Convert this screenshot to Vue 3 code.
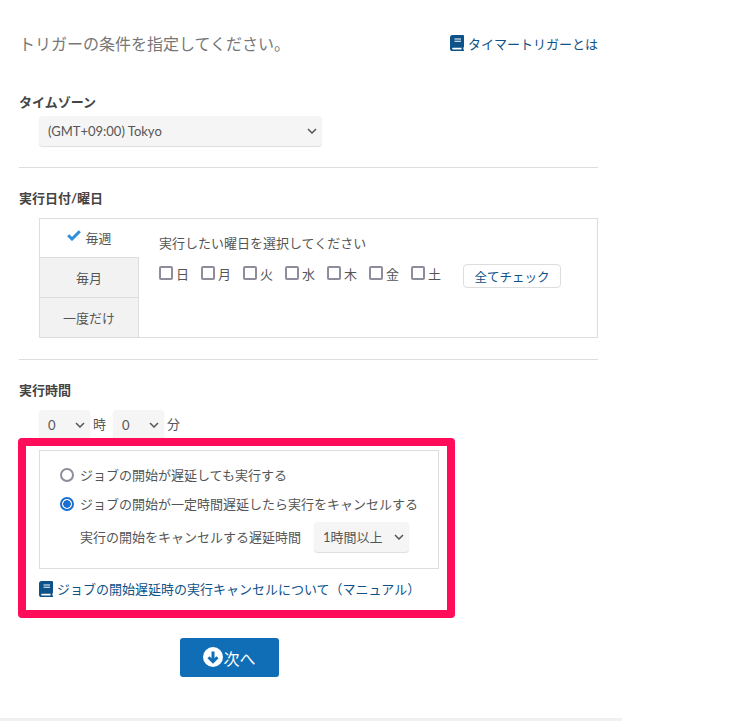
<script setup>
const days = ['日', '月', '火', '水', '木', '金', '土']
</script>

<template>
  <main class="page">
    <header class="head">
      <p class="lead">トリガーの条件を指定してください。</p>
      <a class="link head-link">
        <svg class="book" viewBox="0 0 14 16"><path d="M2.600 0H13a1 1 0 0 1 1 1v10.600a1 1 0 0 1-.5.8c-.2.6-.2 1.600 0 2.200a.8.8 0 0 1 .5.7v.2a.5.5 0 0 1-.5.5H2.600A2.600 2.600 0 0 1 0 13.400V2.600A2.600 2.600 0 0 1 2.600 0ZM4.500 3.400v1h6.500v-1Zm0 2.400v1h6.500v-1ZM2.800 12.800a.9.9 0 0 0 0 1.700h8.800a7 7 0 0 1 0-1.700Z" fill="#0d5288" fill-rule="evenodd"/></svg>
        タイマートリガーとは
      </a>
    </header>

    <section class="zone">
      <h3>タイムゾーン</h3>
      <select class="sel tz"><option>(GMT+09:00) Tokyo</option></select>
    </section>

    <hr class="rule rule-a" />

    <section class="date">
      <h3>実行日付/曜日</h3>
      <div class="tabs">
        <div class="tablist">
          <div class="tab on">
            <svg class="tick" viewBox="0 0 14 11"><path d="M1.200 5.200 5 9l7.800-7.800" fill="none" stroke="#2f8fdf" stroke-width="3"/></svg>
            毎週
          </div>
          <div class="tab">毎月</div>
          <div class="tab">一度だけ</div>
        </div>
        <div class="panel">
          <p class="hint">実行したい曜日を選択してください</p>
          <div class="days">
            <label v-for="d in days" :key="d" class="day"><span class="box"></span>{{ d }}</label>
            <button class="all">全てチェック</button>
          </div>
        </div>
      </div>
    </section>

    <hr class="rule rule-b" />

    <section class="time">
      <h3>実行時間</h3>
      <div class="clock">
        <select class="sel num"><option>0</option></select><span>時</span>
        <select class="sel num"><option>0</option></select><span>分</span>
      </div>
      <div class="delay">
        <div class="radio-row"><span class="radio"></span>ジョブの開始が遅延しても実行する</div>
        <div class="radio-row second"><span class="radio checked"></span>ジョブの開始が一定時間遅延したら実行をキャンセルする</div>
        <div class="cancel-row">
          <span class="cancel-label">実行の開始をキャンセルする遅延時間</span>
          <select class="sel hour"><option>1時間以上</option></select>
        </div>
      </div>
      <a class="link manual">
        <svg class="book" viewBox="0 0 14 16"><path d="M2.600 0H13a1 1 0 0 1 1 1v10.600a1 1 0 0 1-.5.8c-.2.6-.2 1.600 0 2.200a.8.8 0 0 1 .5.7v.2a.5.5 0 0 1-.5.5H2.600A2.600 2.600 0 0 1 0 13.400V2.600A2.600 2.600 0 0 1 2.600 0ZM4.500 3.400v1h6.500v-1Zm0 2.400v1h6.500v-1ZM2.800 12.800a.9.9 0 0 0 0 1.700h8.800a7 7 0 0 1 0-1.700Z" fill="#0d5288" fill-rule="evenodd"/></svg>
        ジョブの開始遅延時の実行キャンセルについて（マニュアル）
      </a>
      <div class="highlight"></div>
    </section>

    <div class="action">
      <button class="next">
        <svg class="down" viewBox="0 0 20 20"><circle cx="10" cy="10" r="10" fill="#fff"/><path d="M10 4.500v10M5.500 10.200 10 14.700l4.500-4.500" fill="none" stroke="#0f6eb5" stroke-width="3"/></svg>次へ
      </button>
    </div>
    <div class="bottom"></div>
  </main>
</template>

<style scoped>
.page {
  width: 622px;
  height: 723px;
  box-sizing: border-box;
  padding: 34px 24px 0 19px;
  position: relative;
  font-family: Lato, "Noto Sans CJK JP", sans-serif;
  font-size: 13px;
  color: #555;
  background: #fff;
  overflow: hidden;
}
p, h3 { margin: 0; }
h3 { font-size: 13px; font-weight: 700; color: #444; line-height: 18px; }
.head { display: flex; justify-content: space-between; align-items: center; height: 20px; }
.lead { font-size: 16px; color: #777; line-height: 20px; }
.link { color: #0d5288; display: flex; align-items: center; gap: 4px; }
.head-link { font-size: 13px; margin-top: -2px; }
.book { width: 14px; height: 16px; flex: none; }
.zone { margin-top: 39px; }
.sel {
  display: block;
  appearance: none;
  border: 0;
  border-radius: 4px;
  background-color: #f5f5f5;
  background-image: url("data:image/svg+xml,%3Csvg xmlns='http://www.w3.org/2000/svg' width='10' height='6'%3E%3Cpath d='M1 1l4 4 4-4' fill='none' stroke='%23555' stroke-width='1.500'/%3E%3C/svg%3E");
  background-repeat: no-repeat;
  background-position: right 5px center;
  box-shadow: 0 1px 1px #ddd;
  font: inherit;
  color: #555;
  box-sizing: border-box;
  outline: none;
  padding: 0 0 0 9px;
}
.tz { width: 283px; height: 30px; margin: 5px 0 0 20px; }
.rule { border: 0; border-top: 1px solid #ddd; margin: 0; }
.rule-a { margin-top: 21px; }
.date { margin-top: 21px; }
.tabs { display: flex; margin: 11px 0 0 20px; height: 120px; border: 1px solid #ddd; box-sizing: border-box; }
.tablist { width: 99px; box-sizing: border-box; border-right: 1px solid #ddd; display: flex; flex-direction: column; flex: none; }
.tab {
  flex: 1;
  display: flex;
  align-items: center;
  justify-content: center;
  gap: 4px;
  background: #f2f2f2;
  border-top: 1px solid #ddd;
  padding-bottom: 1px;
  box-sizing: border-box;
}
.tab:first-child { flex: none; height: 38px; border-top: 0; padding-bottom: 2px; }
.tab.on { background: #fff; margin-right: -1px; position: relative; }
.tick { width: 14px; height: 11px; margin-top: -3px; }
.panel { padding: 15px 20px; }
.hint { line-height: 18px; }
.days { display: flex; align-items: center; margin-top: 8px; }
.day { display: flex; align-items: center; width: 42px; gap: 3px; padding-bottom: 2px; }
.box { border: 2px solid #8d8d9b; border-radius: 2px; box-sizing: content-box; width: 10px; height: 10px; }
.all {
  margin: 4px 0 0 10px;
  width: 98px;
  height: 24px;
  background: #fff;
  border: 1px solid #ddd;
  border-radius: 4px;
  color: #0d5288;
  font: inherit;
  font-size: 12.500px;
  padding: 0;
}
.rule-b { margin-top: 21px; }
.time { margin-top: 21px; position: relative; }
.clock { display: flex; align-items: center; margin: 11px 0 0 20px; gap: 3px; height: 30px; }
.clock span { margin-right: 4px; padding-bottom: 4px; }
.num { width: 51px; height: 30px; }
.delay {
  margin: 10px 159px 0 20px;
  height: 119px;
  border: 1px solid #ddd;
  box-sizing: border-box;
  padding: 14px 20px;
}
.radio-row { display: flex; align-items: center; gap: 6px; line-height: 20px; }
.second { margin-top: 9px; }
.radio { width: 14px; height: 14px; border: 2px solid #8d8d9b; border-radius: 50%; box-sizing: border-box; flex: none; }
.radio.checked { border-color: #1a6fd0; background: radial-gradient(circle, #1a6fd0 0 3.500px, #fff 4px); }
.cancel-row { display: flex; align-items: center; gap: 13px; margin: 8px 0 0 20px; }
.cancel-label { padding-bottom: 2px; }
.hour { width: 95px; height: 30px; }
.manual { margin: 12px 0 0 20px; gap: 4px; line-height: 16px; }
.highlight {
  position: absolute;
  left: -1px;
  top: 57px;
  width: 437px;
  height: 180px;
  box-sizing: border-box;
  border: 8px solid #ff0d5a;
  border-radius: 4px;
  pointer-events: none;
}
.action { margin: 41px 0 0 161px; }
.next {
  width: 99px;
  height: 39px;
  border: 0;
  border-radius: 3px;
  background: #0f6eb5;
  color: #fff;
  font-family: inherit;
  font-size: 16px;
  display: flex;
  align-items: center;
  justify-content: center;
  padding: 0;
}
.down { width: 20px; height: 20px; margin-top: -1px; }
.bottom {
  position: absolute;
  left: 0;
  bottom: 2px;
  width: 622px;
  height: 3px;
  background: #f0f0f0;
}
</style>
